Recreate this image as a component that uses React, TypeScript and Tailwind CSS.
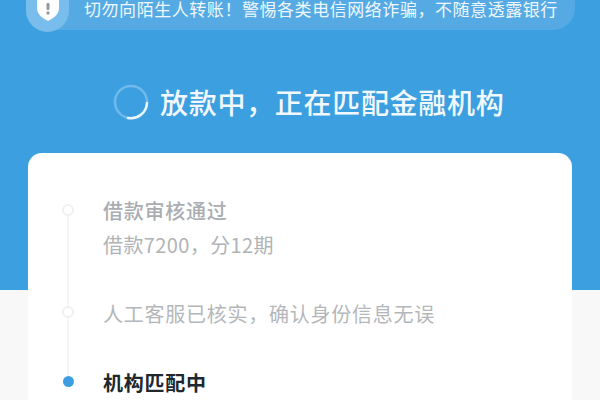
const font = "font-['Noto_Sans_CJK_SC','Noto_Sans',sans-serif]";

function Shield() {
  return (
    <svg width="22" height="26" viewBox="0 0 22 26" className="shrink-0">
      <path d="M11 0 L22 3 V13 C22 19 17 23 11 26 C5 23 0 19 0 13 V3 Z" fill="#ffffff" />
      <rect x="9.5" y="8" width="3" height="7" rx="1.2" fill="#8f9aa3" />
      <circle cx="11" cy="18" r="1.7" fill="#8f9aa3" />
    </svg>
  );
}

function Spinner() {
  return (
    <svg width="36" height="36" viewBox="0 0 36 36" className="shrink-0">
      <circle cx="18" cy="18" r="16" fill="none" stroke="#6fb9ec" strokeWidth="2.5" />
      <path d="M34 19 A16 16 0 0 1 15 34" fill="none" stroke="#eaf5fc" strokeWidth="2.5" strokeLinecap="round" />
    </svg>
  );
}

function Dot({ active }: { active?: boolean }) {
  if (active) return <div className="w-[11px] h-[11px] rounded-full bg-[#3d9fe2]" />;
  return <div className="w-[12px] h-[12px] rounded-full border-2 border-[#eef0f1] bg-white" />;
}

export default function App() {
  return (
    <div className={`${font} h-[400px] w-[600px] overflow-hidden bg-[linear-gradient(#3c9fe0_0,#3c9fe0_290px,#f8f8f8_290px)]`}>
      {/* Notice bar */}
      <div className="mx-[26px] -mt-[20px] h-[50px] w-[549px] rounded-[22px] bg-[#55aae4] flex items-center">
        <div className="w-[43px] h-[54px] rounded-full bg-[#78bdec] flex items-center justify-center shrink-0 pt-[6px]">
          <Shield />
        </div>
        <span className="ml-[15px] self-start mt-[20px] text-[17px] leading-[18px] tracking-[0.55px] text-[#eef7fd] whitespace-nowrap">
          切勿向陌生人转账！警惕各类电信网络诈骗，不随意透露银行
        </span>
      </div>

      {/* Status title */}
      <div className="mt-[54px] ml-[113px] flex items-center gap-[11px]">
        <Spinner />
        <h1 className="text-[28px] leading-[36px] tracking-[0.7px] font-medium text-[#f2f9fe] whitespace-nowrap">
          放款中，正在匹配金融机构
        </h1>
      </div>

      {/* Progress card */}
      <div className="mx-[28px] mt-[33px] w-[544px] h-[300px] rounded-t-[14px] bg-white flex">
        <div className="w-[75px] pt-[51px] flex flex-col items-center pl-[5px] shrink-0">
          <Dot />
          <div className="w-[2px] h-[90px] bg-[#f4f5f6]" />
          <Dot />
          <div className="w-[2px] h-[58px] bg-[#f4f5f6]" />
          <Dot active />
        </div>
        <div className="pt-[44px] text-[20px] tracking-[0.75px] leading-[28px]">
          <p className="font-medium text-[#a9adb1]">借款审核通过</p>
          <p className="mt-[6px] text-[#b0b3b6] tracking-[0.4px]">借款7200，分12期</p>
          <p className="mt-[41px] text-[#b4b7ba]">人工客服已核实，确认身份信息无误</p>
          <p className="mt-[41px] font-bold text-[#20282e]">机构匹配中</p>
        </div>
      </div>
    </div>
  );
}
